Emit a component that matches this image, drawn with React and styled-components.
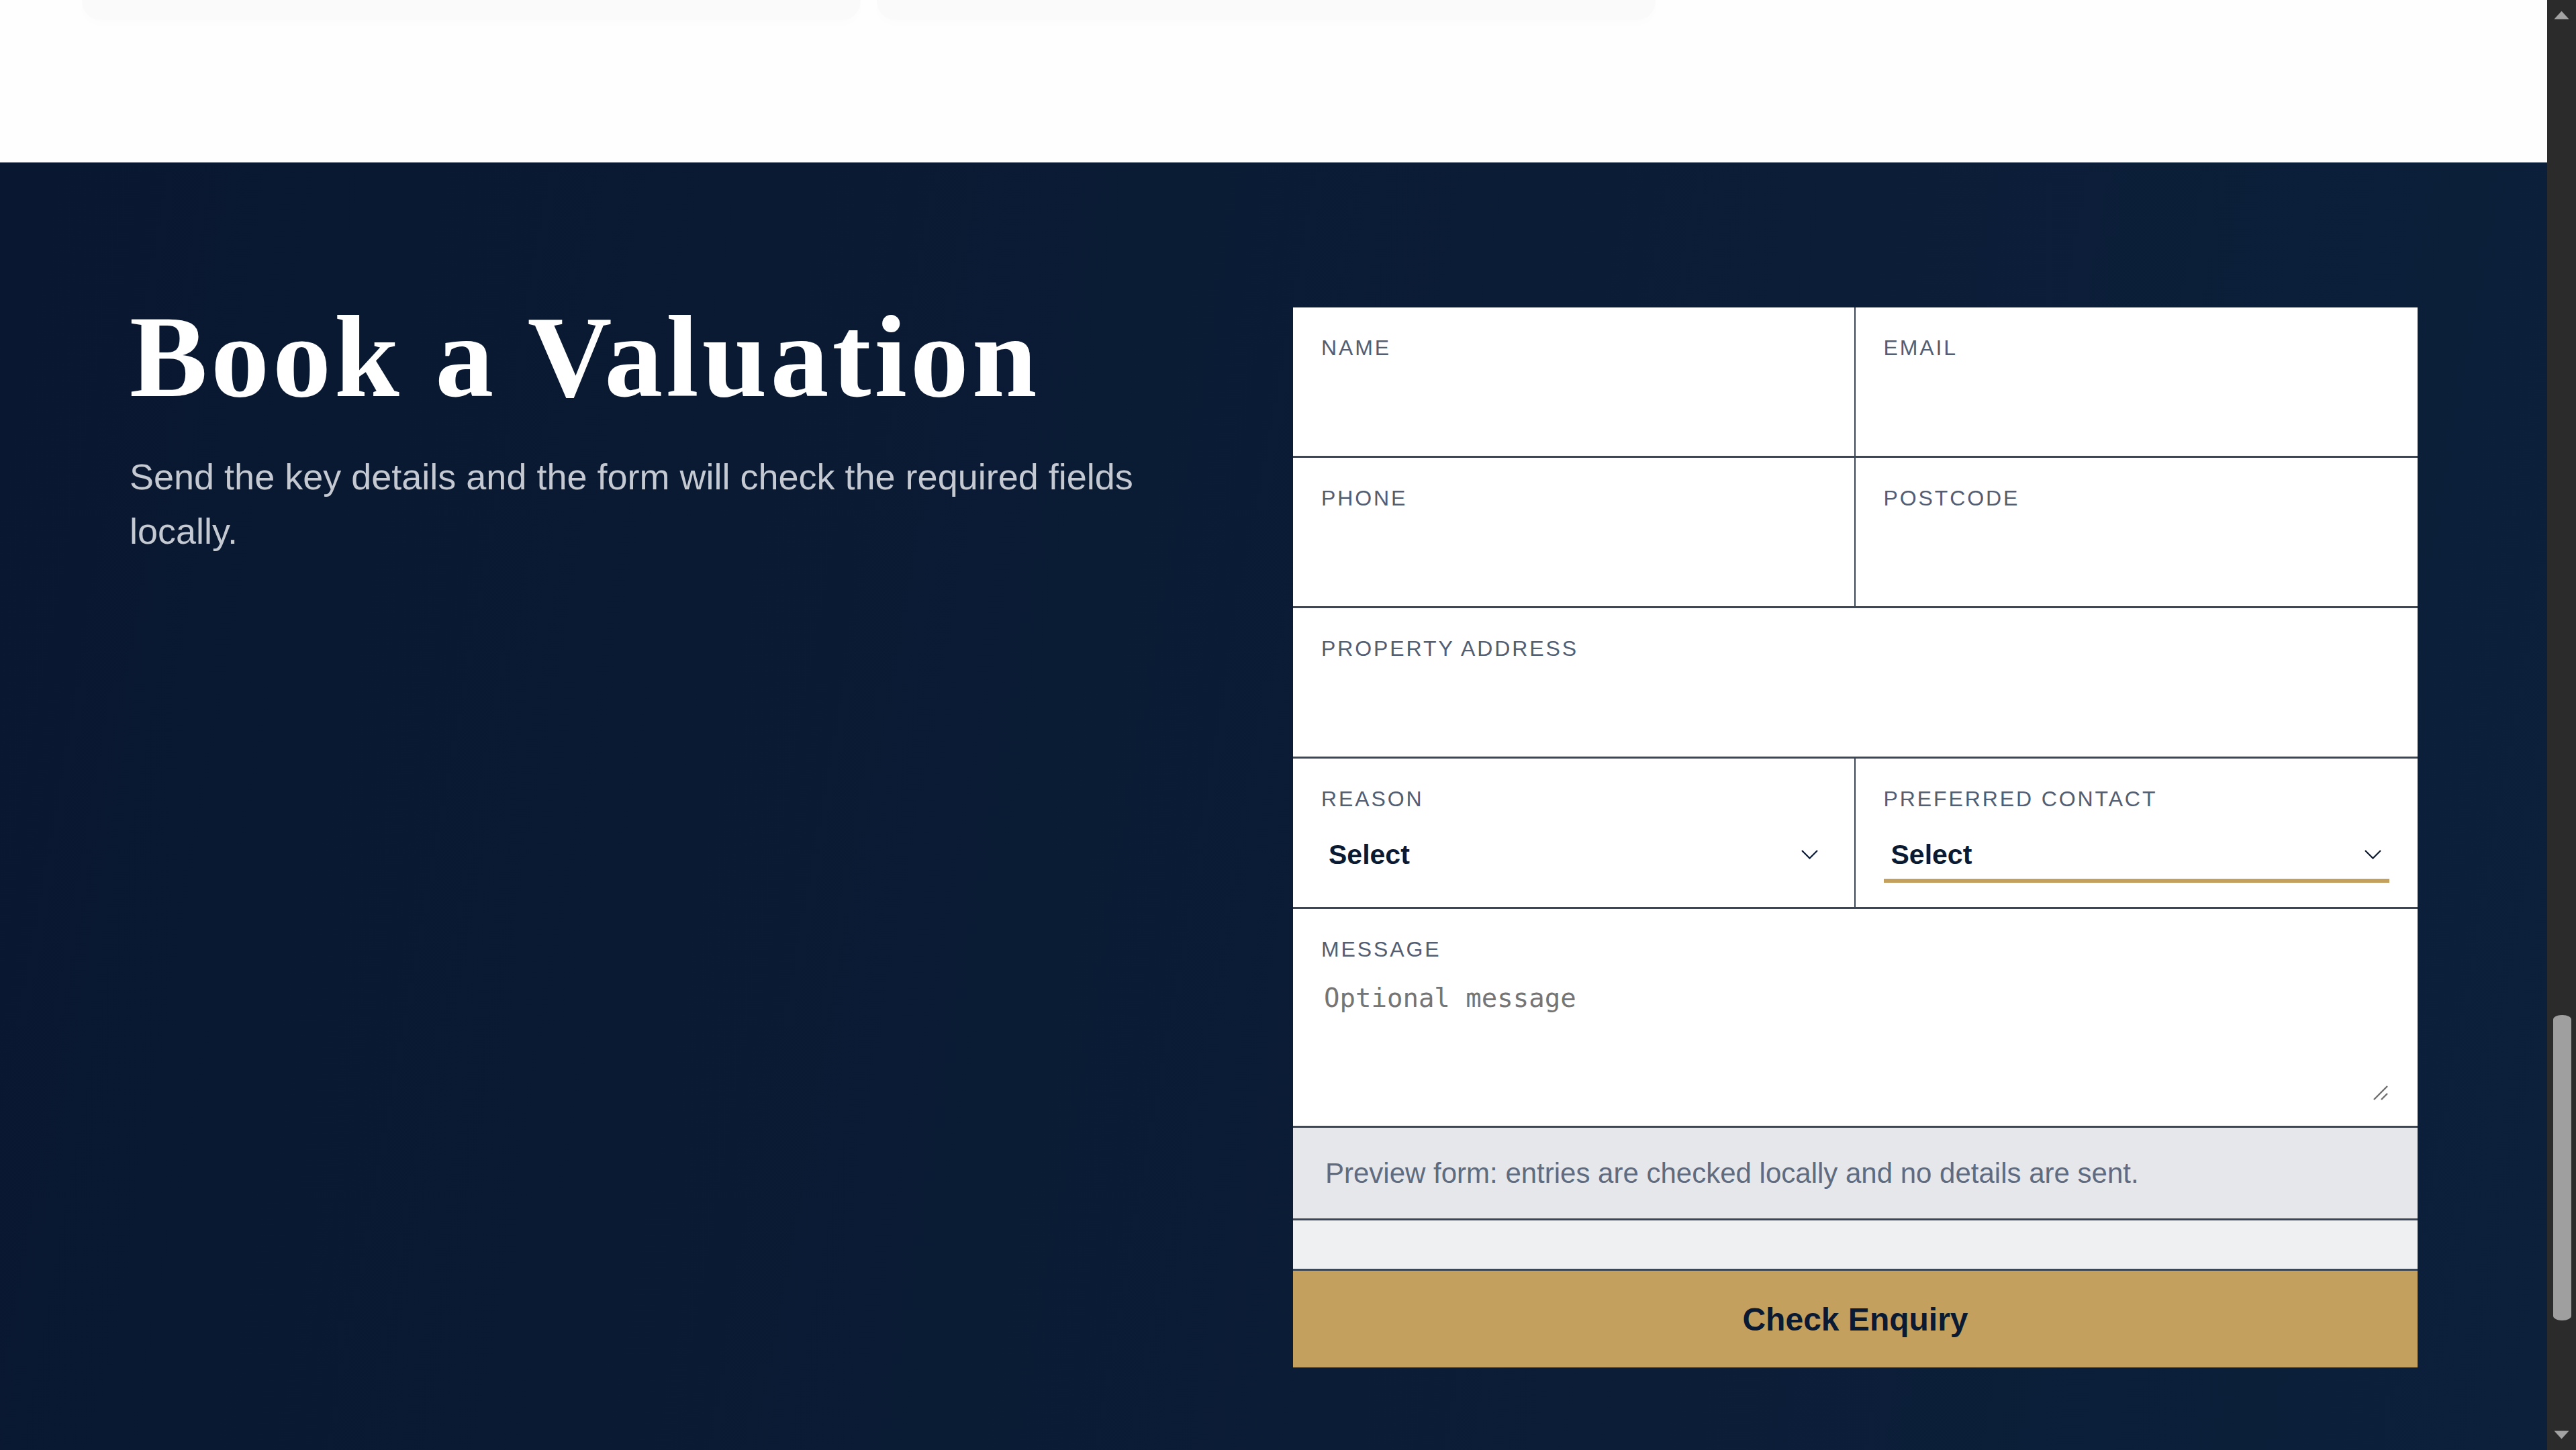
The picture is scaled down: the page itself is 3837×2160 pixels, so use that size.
import React from "react";
import styled, { createGlobalStyle } from "styled-components";

const Global = createGlobalStyle`
  html, body { margin: 0; padding: 0; height: 100%; overflow: hidden; background: #fff; }
  #root { height: 100%; }
  * { box-sizing: border-box; }
`;

const Page = styled.div`
  display: flex;
  height: 100vh;
  overflow: hidden;
  font-family: "Liberation Sans", Arial, sans-serif;
`;

const Main = styled.main`
  flex: 1;
  min-width: 0;
  display: flex;
  flex-direction: column;
`;

/* scrollbar drawing on the right edge */
const Rail = styled.div`
  width: 43px;
  flex: none;
  background: #2b2b2b;
  display: flex;
  flex-direction: column;
`;

const RailButton = styled.div`
  height: 43px;
  flex: none;
  display: flex;
  justify-content: center;
  align-items: ${(p) => (p.$down ? "flex-end" : "flex-start")};
  padding: ${(p) => (p.$down ? "0 0 16px" : "16px 0 0")};
`;

const RailTrack = styled.div`
  position: relative;
  flex: 1;
`;

const Thumb = styled.div`
  position: absolute;
  left: 9px;
  width: 27px;
  top: 1469px;
  height: 455px;
  background: #9f9f9f;
  border-radius: 13px / 7px;
`;

const Intro = styled.section`
  height: 242px;
  flex: none;
  background: #fefefe;
  padding: 0 0 0 122px;
  display: flex;
  gap: 24px;
  align-items: flex-start;
`;

const CardEdge = styled.div`
  width: 1160px;
  height: 30px;
  background: #fafafa;
  border-radius: 0 0 28px 28px;
  box-shadow: 0 6px 14px rgba(0, 0, 0, 0.012);
`;

const Valuation = styled.section`
  flex: 1;
  background: linear-gradient(100deg, #091830 0%, #0b1c36 55%, #0c203b 100%);
  padding: 203px 193px 215px;
`;

const Layout = styled.div`
  display: grid;
  grid-template-columns: 1fr 1fr;
  column-gap: 58px;
  align-items: start;
`;

const Copy = styled.div`
  display: flex;
  flex-direction: column;
`;

const Heading = styled.h2`
  margin: 0;
  font-family: "Liberation Serif", "DejaVu Serif", Georgia, serif;
  font-weight: 700;
  font-size: 174px;
  line-height: 174px;
  letter-spacing: 5px;
  color: #ffffff;
`;

const Lead = styled.p`
  margin: 51px 0 0;
  max-width: 1560px;
  font-family: "Liberation Sans", Arial, sans-serif;
  font-size: 54px;
  line-height: 81px;
  color: #c4c9d2;
`;

const Form = styled.form`
  margin-top: 13px;
  background: #ffffff;
  display: flex;
  flex-direction: column;
`;

const Row = styled.div`
  display: grid;
  grid-template-columns: 1fr 1fr;
  border-bottom: 3px solid #3b4657;
`;

const Field = styled.div`
  display: flex;
  flex-direction: column;
  gap: 10px;
  padding: 42px 42px 36px;
  min-width: 0;
  grid-column: ${(p) => (p.$span ? "1 / -1" : "auto")};
  border-right: ${(p) => (p.$divider ? "2px solid #3b4657" : "0")};
`;

const Label = styled.label`
  display: block;
  font-family: "Liberation Sans", Arial, sans-serif;
  font-size: 32px;
  line-height: 37px;
  letter-spacing: 2.9px;
  text-transform: uppercase;
  color: #525e73;
`;

const TextInput = styled.input`
  display: block;
  width: 100%;
  height: 96px;
  border: 0;
  border-bottom: 6px solid transparent;
  background: transparent;
  padding: 18px 11px 0;
  font-family: "Liberation Sans", Arial, sans-serif;
  font-weight: 700;
  font-size: 41px;
  color: #0b1a33;
  outline: none;
`;

const SelectWrap = styled.div`
  position: relative;
`;

const Select = styled.select`
  display: block;
  width: 100%;
  height: 96px;
  appearance: none;
  -webkit-appearance: none;
  border: 0;
  border-radius: 0;
  border-bottom: 6px solid ${(p) => (p.$active ? "#c4a05e" : "transparent")};
  background: transparent;
  padding: 18px 50px 0 11px;
  font-family: "Liberation Sans", Arial, sans-serif;
  font-weight: 700;
  font-size: 41px;
  color: #0b1a33;
  outline: none;
`;

const Chevron = styled.svg`
  position: absolute;
  right: 12px;
  top: 47px;
  width: 25px;
  height: 14px;
  pointer-events: none;
`;

const AreaWrap = styled.div`
  position: relative;
`;

const TextArea = styled.textarea`
  display: block;
  width: 100%;
  height: 198px;
  border: 0;
  padding: 21px 4px;
  resize: none;
  outline: none;
  background: transparent;
  font-family: "DejaVu Sans Mono", "Liberation Mono", monospace;
  font-size: 39px;
  color: #0b1a33;

  &::placeholder { color: #757575; }
`;

const Grip = styled.svg`
  position: absolute;
  right: 0;
  bottom: 0;
  width: 24px;
  height: 24px;
  pointer-events: none;
`;

const Note = styled.p`
  margin: 0;
  padding: 36px 48px;
  background: #e5e7ea;
  border-bottom: 3px solid #3b4657;
  font-family: "Liberation Sans", Arial, sans-serif;
  font-size: 42px;
  line-height: 63px;
  color: #5f6b80;
`;

const Status = styled.div`
  height: 75px;
  background: #eef0f2;
  border-bottom: 3px solid #3b4657;
`;

const Submit = styled.button`
  display: block;
  width: 100%;
  height: 144px;
  border: 0;
  border-radius: 0;
  background: #c4a05e;
  font-family: "Liberation Sans", Arial, sans-serif;
  font-weight: 700;
  font-size: 48px;
  color: #0b1a33;
  cursor: pointer;
`;

function SelectField({ label, active, divider }) {
  return (
    <Field $divider={divider}>
      <Label>{label}</Label>
      <SelectWrap>
        <Select $active={active} defaultValue="">
          <option value="">Select</option>
        </Select>
        <Chevron viewBox="0 0 25 14" fill="none">
          <polyline points="1,1 12.5,12.5 24,1" stroke="#0b1a33" strokeWidth="2.2" />
        </Chevron>
      </SelectWrap>
    </Field>
  );
}

function InputField({ label, divider, span, type = "text" }) {
  return (
    <Field $divider={divider} $span={span}>
      <Label>{label}</Label>
      <TextInput type={type} />
    </Field>
  );
}

export default function App() {
  return (
    <>
      <Global />
      <Page>
        <Main>
          <Intro>
            <CardEdge />
            <CardEdge />
          </Intro>
          <Valuation>
            <Layout>
              <Copy>
                <Heading>Book a Valuation</Heading>
                <Lead>Send the key details and the form will check the required fields locally.</Lead>
              </Copy>
              <Form onSubmit={(e) => e.preventDefault()} noValidate>
                <Row>
                  <InputField label="Name" divider />
                  <InputField label="Email" type="email" />
                </Row>
                <Row>
                  <InputField label="Phone" divider />
                  <InputField label="Postcode" />
                </Row>
                <Row>
                  <InputField label="Property Address" span />
                </Row>
                <Row>
                  <SelectField label="Reason" divider />
                  <SelectField label="Preferred Contact" active />
                </Row>
                <Row>
                  <Field $span>
                    <Label>Message</Label>
                    <AreaWrap>
                      <TextArea placeholder="Optional message" />
                      <Grip viewBox="0 0 24 24" fill="none">
                        <line x1="1" y1="21" x2="21" y2="1" stroke="#6f6f6f" strokeWidth="2.4" />
                        <line x1="12" y1="21" x2="21" y2="12" stroke="#6f6f6f" strokeWidth="2.4" />
                      </Grip>
                    </AreaWrap>
                  </Field>
                </Row>
                <Note>Preview form: entries are checked locally and no details are sent.</Note>
                <Status />
                <Submit type="submit">Check Enquiry</Submit>
              </Form>
            </Layout>
          </Valuation>
        </Main>
        <Rail>
          <RailButton>
            <svg width="23" height="13" viewBox="0 0 23 13">
              <path d="M11.5 0.5 L22.5 12.5 L0.5 12.5 Z" fill="#a3a3a3" />
            </svg>
          </RailButton>
          <RailTrack>
            <Thumb />
          </RailTrack>
          <RailButton $down>
            <svg width="23" height="13" viewBox="0 0 23 13">
              <path d="M0.5 0.5 L22.5 0.5 L11.5 12.5 Z" fill="#a3a3a3" />
            </svg>
          </RailButton>
        </Rail>
      </Page>
    </>
  );
}
